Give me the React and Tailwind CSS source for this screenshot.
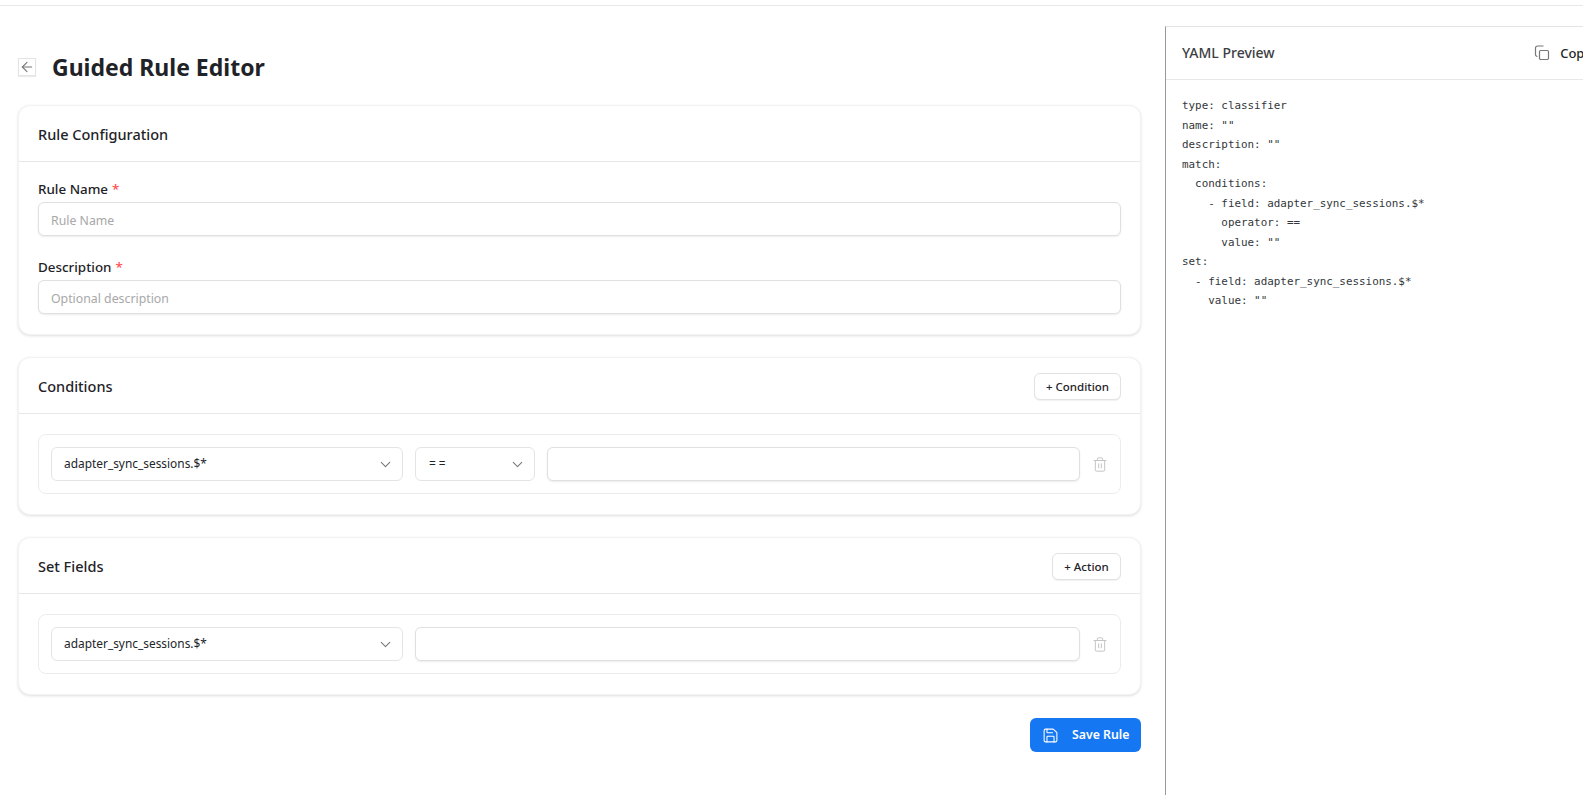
import React from 'react';
import { ArrowLeft, ChevronDown, Save, Trash2 } from 'lucide-react';

const fontSans = "font-['Noto_Sans',sans-serif]";

function Card({ title, action, children }) {
  return (
    <section className="mb-[22px] rounded-xl border border-[#f2f2f2] bg-white shadow-[0_1px_3px_rgba(0,0,0,0.13)]">
      <div className="flex h-[56px] items-center justify-between border-b border-[#e8e8e8] px-[19px]">
        <h2 className="mt-[2px] text-[14.5px] font-medium text-[#1f2328]">{title}</h2>
        {action}
      </div>
      <div className="px-[19px] py-5">{children}</div>
    </section>
  );
}

function AddButton({ label, width }) {
  return (
    <button className={`mt-[2px] flex h-[27px] items-center justify-center rounded-md border border-[#e2e2e2] bg-white text-[11.5px] font-medium text-[#1f2328] shadow-[0_1px_1px_rgba(0,0,0,0.06)] ${width}`}>
      {label}
    </button>
  );
}

function Field({ label, placeholder }) {
  return (
    <div>
      <label className="mb-[6px] flex h-[14px] items-center text-[13.4px] font-medium text-[#1f2328]">
        {label}
        <span className="ml-1 text-[#ff4d4f]">*</span>
      </label>
      <input
        placeholder={placeholder}
        className="block h-[34px] w-full rounded-md border border-[#e0e0e0] bg-white px-3 pt-[2px] text-[12.3px] shadow-[0_1px_2px_rgba(0,0,0,0.08)] outline-none placeholder:text-[#a8a8a8]"
      />
    </div>
  );
}

function SelectBox({ value, width, valueClass = '' }) {
  return (
    <div className={`flex h-[34px] shrink-0 items-center justify-between rounded-md border border-[#e4e4e4] bg-white pl-3 pr-2 text-[11.9px] text-[#22262a] ${width}`}>
      <span className={valueClass}>{value}</span>
      <ChevronDown size={17} strokeWidth={1.5} className="text-[#777]" />
    </div>
  );
}

function Row({ children }) {
  return (
    <div className="flex items-center gap-3 rounded-lg border border-[#ececec] p-3">
      {children}
      <input className="h-[34px] min-w-0 flex-1 rounded-md border border-[#e0e0e0] bg-white shadow-[0_1px_2px_rgba(0,0,0,0.08)] outline-none" />
      <button className="flex w-[16px] shrink-0 justify-center text-[#c4c4c4]">
        <Trash2 size={17} strokeWidth={1.5} />
      </button>
    </div>
  );
}

const yaml = `type: classifier
name: ""
description: ""
match:
  conditions:
    - field: adapter_sync_sessions.$*
      operator: ==
      value: ""
set:
  - field: adapter_sync_sessions.$*
    value: ""`;

export default function App() {
  return (
    <div className={`flex h-screen w-full flex-col overflow-hidden bg-white ${fontSans}`}>
      <div className="h-[6px] shrink-0 border-b border-[#e8e8e8]" />
      <div className="flex min-h-0 flex-1">
        <main className="w-[1165px] shrink-0 pl-[18px] pr-6 pt-[45px]">
          <div className="mb-[22px] flex h-8 items-center gap-4">
            <button className="flex h-[18px] w-[18px] items-center justify-center border border-[#e4e4e4] text-[#777] shadow-[0_1px_1px_rgba(0,0,0,0.08)]">
              <ArrowLeft size={16} strokeWidth={1.6} />
            </button>
            <h1 className="text-[23px] font-bold text-[#1f2328]">Guided Rule Editor</h1>
          </div>

          <Card title="Rule Configuration">
            <div className="flex flex-col gap-6">
              <Field label="Rule Name" placeholder="Rule Name" />
              <Field label="Description" placeholder="Optional description" />
            </div>
          </Card>

          <Card title="Conditions" action={<AddButton label="+ Condition" width="w-[87px]" />}>
            <Row>
              <SelectBox value="adapter_sync_sessions.$*" width="w-[352px]" />
              <SelectBox value="==" width="w-[120px]" valueClass="ml-px tracking-[3px]" />
            </Row>
          </Card>

          <Card title="Set Fields" action={<AddButton label="+ Action" width="w-[69px]" />}>
            <Row>
              <SelectBox value="adapter_sync_sessions.$*" width="w-[352px]" />
            </Row>
          </Card>

          <div className="mt-[23px] flex justify-end">
            <button className="flex h-[34px] w-[111px] items-center gap-[13px] rounded-md bg-[#1677f2] pl-3 text-[12.3px] font-semibold text-white">
              <Save size={17} strokeWidth={1.5} />
              Save Rule
            </button>
          </div>
        </main>

        <aside className="mt-[20px] w-[450px] shrink-0 border-l border-t border-l-[#999] border-t-[#e4e4e4]">
          <div className="flex h-[53px] items-center justify-between border-b border-[#e8e8e8] px-4">
            <h3 className="mb-[2px] text-[14px] font-medium text-[#3c4043]">YAML Preview</h3>
            <button className="flex items-center gap-[10px] pr-[8px] text-[13px] font-medium text-[#22262a]">
              <svg width="16" height="16" viewBox="0 0 16 16" fill="none" stroke="#777" strokeWidth="1.2">
                <rect x="5.5" y="5.5" width="9" height="9" rx="1.2" />
                <path d="M3.5 11.5 A2 2 0 0 1 1.5 9.5 V3 A2 2 0 0 1 3.5 1 H9.5" />
              </svg>
              <span className="mt-[2px]">Copy</span>
            </button>
          </div>
          <pre className="px-4 pt-4 font-['DejaVu_Sans_Mono',monospace] text-[10.9px] leading-[19.5px] text-[#33373b]">{yaml}</pre>
        </aside>
      </div>
    </div>
  );
}
